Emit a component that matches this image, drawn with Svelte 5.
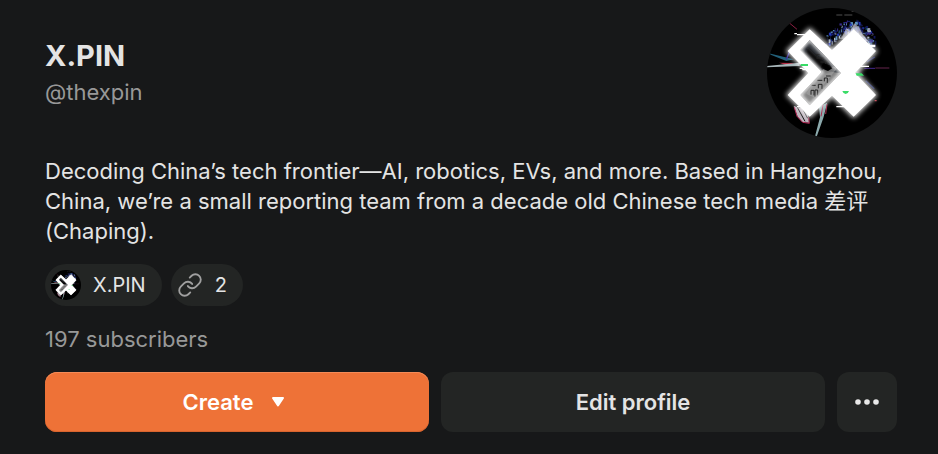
<script>
  let profile = {
    name: "X.PIN",
    handle: "@thexpin",
    bio: "Decoding China’s tech frontier—AI, robotics, EVs, and more. Based in Hangzhou, China, we’re a small reporting team from a decade old Chinese tech media 差评 (Chaping).",
    subscribers: 197,
    links: 2,
  };

  // scattered pixels above the top right arm of the logo
  const noiseColors = ["#2339b8", "#10165a", "#5f93bd", "#3a2c90", "#a9b4c5", "#0f1330", "#24566f", "#000", "#000", "#161f70"];
  let seed = 7;
  function random() {
    seed = (seed * 16807) % 2147483647;
    return seed / 2147483647;
  }
  const noise = Array.from({ length: 240 }, () => {
    const a = random();
    const top = 112 - 50 * Math.sin(a * Math.PI);
    return {
      x: 208 + a * 146,
      y: top + random() * 42 - 6,
      w: 2 + random() * 7,
      h: 3 + random() * 8,
      fill: noiseColors[Math.floor(random() * noiseColors.length)],
    };
  });
</script>

{#snippet logo(id)}
  <svg class="logo" viewBox="30 24 390 390" aria-hidden="true">
    <defs>
      <clipPath id="{id}-clip"><circle cx="225" cy="219" r="195" /></clipPath>
      <filter id="{id}-glow" x="-20%" y="-20%" width="140%" height="140%">
        <feGaussianBlur stdDeviation="8" />
      </filter>
      <filter id="{id}-soft" x="-20%" y="-20%" width="140%" height="140%">
        <feGaussianBlur stdDeviation="5" />
      </filter>
      <clipPath id="{id}-hole"><path d="M158 120 L130 150 L195 216 L130 285 L158 316 L252 219 Z" /></clipPath>
    </defs>
    <g clip-path="url(#{id}-clip)">
      <rect x="30" y="24" width="390" height="390" fill="#000" />
      {#each noise as n}
        <rect x={n.x} y={n.y} width={n.w} height={n.h} fill={n.fill} />
      {/each}
      <path d="M252 116 L268 84 L280 94 L292 70 L306 82 L318 104 L334 124Z" fill="#cbcbd4" opacity=".65" />
      <path d="M284 34h10M238 45h18M262 45h24M342 48h8" stroke="#777" stroke-width="2" />
      <path d="M96 68l24 20" stroke="#8c2044" stroke-width="3" />
      <path d="M35 160l75 18-22 5-45-18Z" fill="#22607a" />
      <path d="M66 188l48 1-26 7Z" fill="#b52d45" />
      <path d="M28 198l100-10v10l-100 4Z" fill="#a8b6ba" />
      <path d="M100 150l-12 28" stroke="#3a2ca0" stroke-width="4" />
      <path d="M322 205h32" stroke="#43288c" stroke-width="3" />
      <path d="M355 204h42" stroke="#64244c" stroke-width="3" />
      <path d="M326 242l26 24M330 185l24-14" stroke="#161f58" stroke-width="4" />
      <path d="M353 302h6" stroke="#c03545" stroke-width="4" />
      <path d="M110 318l12 32 14 16 20 2-4-38Z" fill="#bcb3bc" />
      <path d="M112 322l8 27 17 18 20 3-2-18" fill="none" stroke="#b92a58" stroke-width="3" />
      <path d="M120 320l24 44M136 325l16 30" stroke="#111" stroke-width="3" />
      <path d="M186 320l25-12-12 46-20 56-5-1 15-57Z" fill="#8ba9ac" />
      <path d="M198 315l-6 34M210 312l-4 30" stroke="#aa294c" stroke-width="3" />
      <path
        d="M158 88 L225 150 L290 88 L357 153 L300 219 L357 285 L290 350 L225 287 L158 350 L92 285 L154 219 L92 153 Z"
        fill="#fff" stroke="#fff" stroke-width="8" filter="url(#{id}-glow)" opacity=".9"
      />
      <path
        d="M158 88 L225 150 L290 88 L357 153 L294 219 L357 285 L290 350 L225 287 L158 350 L92 285 L154 219 L92 153 Z"
        fill="#fff"
      />
      <g clip-path="url(#{id}-hole)">
        <rect x="125" y="115" width="135" height="205" fill="#858585" />
        <path d="M158 120l-24 30 58 60 58 10-40-48Z" fill="#3c4046" />
        <path d="M150 140l30 28 32 18 12 26-20 6-22-20-36-38Z" fill="#0c0c0e" filter="url(#{id}-soft)" />
        <path d="M204 200h40l-74 92-22-10Z" fill="#a2a2a2" opacity=".6" />
        <path
          d="M162 284v-13h9v15M174 290v-20h8v16M184 265v-12h11v14M202 244v-10h9v15M164 256h12M181 241h15M207 228h14M176 164h13M178 174h24M190 186h14M206 180v12"
          fill="none" stroke="#262626" stroke-width="3"
        />
        <path d="M198 190l20 6 8 9-13 8-22-9Z" fill="#000" />
        <path d="M158 120 L130 150 L195 216 L130 285 L158 316 L252 219 Z" fill="none" stroke="#fff" stroke-width="9" filter="url(#{id}-soft)" opacity=".8" />
      </g>
      <path d="M120 104h42M112 101h8M136 209h26M128 205h12M238 320h24M250 199h86M330 136h25M325 139h30M120 320h12M290 170h44" stroke="#fff" stroke-width="4" />
      <path d="M131 192h22v6h-22ZM296 220h18l7 7h-22ZM256 273h20q-3 9-10 9t-10-9Z" fill="#39dc67" />
    </g>
  </svg>
{/snippet}

<main class="profile">
  <header>
    <div class="identity">
      <h1>{profile.name}</h1>
      <p class="handle">{profile.handle}</p>
    </div>
    <div class="avatar">{@render logo("avatar")}</div>
  </header>

  <p class="bio">{profile.bio}</p>

  <div class="chips">
    <button class="chip">
      <span class="mini">{@render logo("mini")}</span>
      {profile.name}
    </button>
    <button class="chip" aria-label="{profile.links} links">
      <svg class="link-icon" viewBox="0 0 24 24" aria-hidden="true">
        <path d="M10 13a5 5 0 0 0 7.54.54l3-3a5 5 0 0 0-7.07-7.07l-1.72 1.71" />
        <path d="M14 11a5 5 0 0 0-7.54-.54l-3 3a5 5 0 0 0 7.07 7.07l1.71-1.71" />
      </svg>
      {profile.links}
    </button>
  </div>

  <p class="subscribers">{profile.subscribers} subscribers</p>

  <div class="actions">
    <button class="action create">
      Create
      <svg class="caret" viewBox="0 0 14 10" aria-hidden="true">
        <path d="M2 1h10L7 8.5Z" />
      </svg>
    </button>
    <button class="action">Edit profile</button>
    <button class="action more" aria-label="More">
      <svg viewBox="0 0 24 6" aria-hidden="true">
        <circle cx="3" cy="3" r="2.8" />
        <circle cx="12" cy="3" r="2.8" />
        <circle cx="21" cy="3" r="2.8" />
      </svg>
    </button>
  </div>
</main>

<style>
  :global(body) { background: #171819; }
  .profile {
    padding: 8px 41px 22px 45px;
    color: #e4e4e4;
    font-family: Inter, "Noto Sans CJK SC", sans-serif;
    font-size: 22px;
    line-height: 30px;
  }
  h1, p { margin: 0; }
  header { display: flex; justify-content: space-between; }
  .identity { padding-top: 30px; }
  h1 { font-size: 29px; line-height: 36px; font-weight: 700; }
  .handle { margin-top: 3px; color: #989898; }
  .avatar { width: 130px; height: 130px; flex-shrink: 0; }
  .logo { display: block; width: 100%; height: 100%; }
  .bio { margin-top: 18px; }
  .chips { display: flex; gap: 9px; margin-top: 18px; }
  button { border: 0; font: inherit; color: inherit; cursor: pointer; }
  .chip {
    display: flex;
    align-items: center;
    gap: 12px;
    height: 42px;
    padding: 0 16px 0 6px;
    border-radius: 21px;
    background: #232524;
    font-size: 20px;
  }
  .mini { width: 30px; height: 30px; }
  .link-icon { width: 26px; height: 26px; fill: none; stroke: #a0a0a0; stroke-width: 1.7; stroke-linecap: round; stroke-linejoin: round; }
  .subscribers { margin-top: 18px; color: #989898; }
  .actions { display: grid; grid-template-columns: 1fr 1fr 60px; gap: 12px; margin-top: 18px; }
  .action {
    display: flex;
    align-items: center;
    justify-content: center;
    height: 60px;
    padding: 0;
    border-radius: 12px;
    background: #232524;
    font-weight: 600;
  }
  .create { gap: 18px; padding-right: 6px; background: #ee7237; color: #fff; box-shadow: inset 0 1px #f48b58, inset 0 -1px #d9642e; }
  .caret { width: 14px; height: 10px; fill: #fff; stroke: #fff; stroke-width: 2; stroke-linejoin: round; }
  .more svg { width: 24px; height: 6px; fill: #e8e8e8; }
</style>
